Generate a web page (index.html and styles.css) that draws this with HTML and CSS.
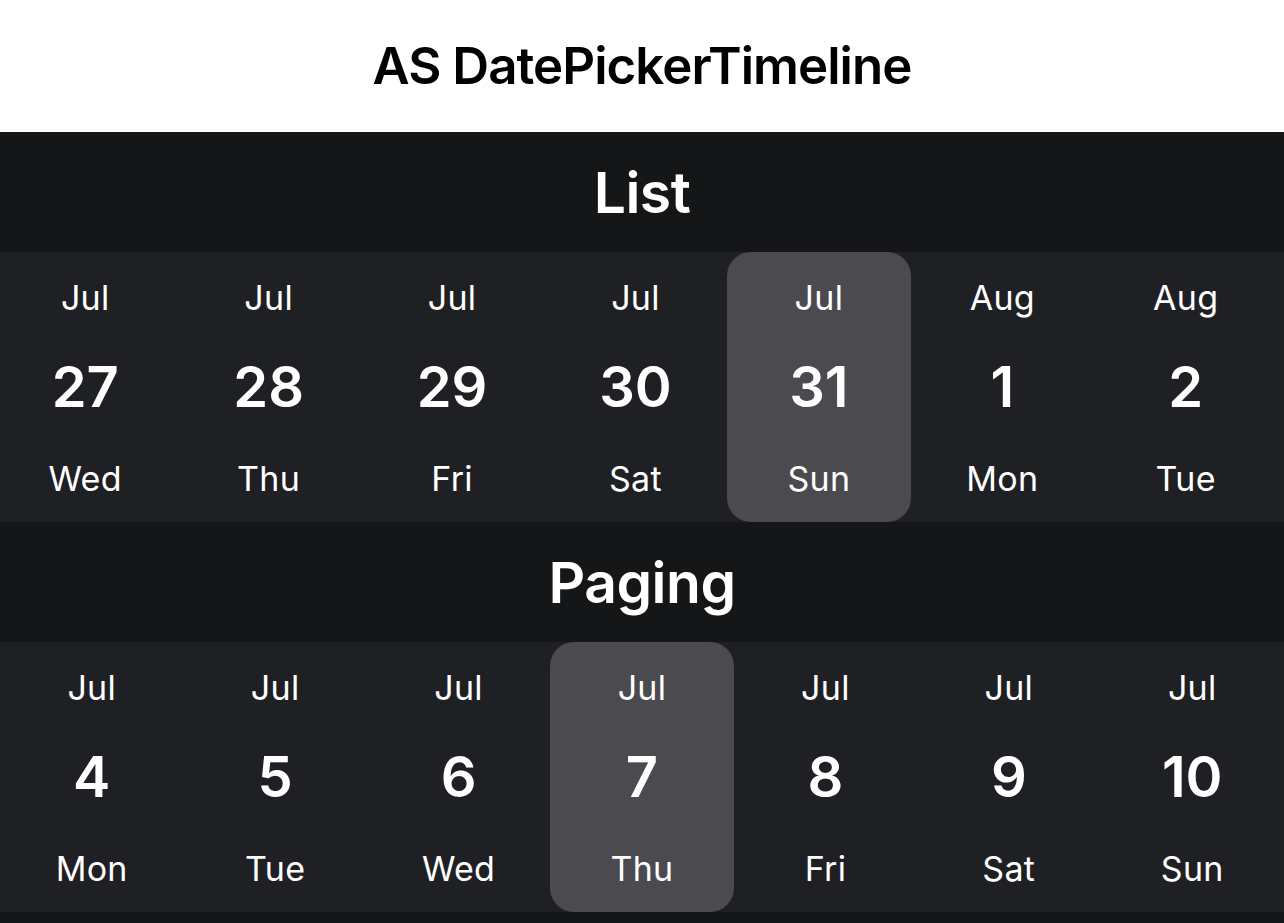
FILE: index.html
```html
<!DOCTYPE html>
<html lang="en">
<head>
<meta charset="utf-8">
<title>AS DatePickerTimeline</title>
<link rel="stylesheet" href="styles.css">
</head>
<body>
<header class="app-title">AS DatePickerTimeline</header>
<main class="content">
  <section class="timeline">
    <h2 class="timeline-title">List</h2>
    <div class="strip">
      <div class="track track-list">
        <div class="day"><span class="month">Jul</span><span class="date">27</span><span class="weekday">Wed</span></div>
        <div class="day"><span class="month">Jul</span><span class="date">28</span><span class="weekday">Thu</span></div>
        <div class="day"><span class="month">Jul</span><span class="date">29</span><span class="weekday">Fri</span></div>
        <div class="day"><span class="month">Jul</span><span class="date">30</span><span class="weekday">Sat</span></div>
        <div class="day selected"><span class="month">Jul</span><span class="date">31</span><span class="weekday">Sun</span></div>
        <div class="day"><span class="month">Aug</span><span class="date">1</span><span class="weekday">Mon</span></div>
        <div class="day"><span class="month">Aug</span><span class="date">2</span><span class="weekday">Tue</span></div>
      </div>
    </div>
  </section>
  <section class="timeline">
    <h2 class="timeline-title">Paging</h2>
    <div class="strip">
      <div class="track">
        <div class="day"><span class="month">Jul</span><span class="date">4</span><span class="weekday">Mon</span></div>
        <div class="day"><span class="month">Jul</span><span class="date">5</span><span class="weekday">Tue</span></div>
        <div class="day"><span class="month">Jul</span><span class="date">6</span><span class="weekday">Wed</span></div>
        <div class="day selected"><span class="month">Jul</span><span class="date">7</span><span class="weekday">Thu</span></div>
        <div class="day"><span class="month">Jul</span><span class="date">8</span><span class="weekday">Fri</span></div>
        <div class="day"><span class="month">Jul</span><span class="date">9</span><span class="weekday">Sat</span></div>
        <div class="day"><span class="month">Jul</span><span class="date">10</span><span class="weekday">Sun</span></div>
      </div>
    </div>
  </section>
</main>
</body>
</html>
```
FILE: styles.css
```css
* { box-sizing: border-box; }
html, body {
  margin: 0;
  padding: 0;
  height: 100%;
}
body {
  font-family: Inter, "Noto Sans", "Liberation Sans", sans-serif;
  background: #151618;
  color: #ffffff;
  overflow: hidden;
}
.app-title {
  height: 132px;
  background: #ffffff;
  color: #000000;
  display: flex;
  align-items: center;
  justify-content: center;
  font-size: 51px;
  font-weight: 600;
  letter-spacing: -0.95px;
  padding-bottom: 1px;
}
.content {
  background: #151618;
}
.timeline-title {
  margin: 0;
  height: 120px;
  display: flex;
  align-items: center;
  justify-content: center;
  font-size: 57px;
  font-weight: 600;
  letter-spacing: -0.5px;
  background: #151618;
}
.strip {
  height: 270px;
  background: #1f2024;
  overflow: hidden;
}
.track {
  display: flex;
  width: 100%;
  height: 100%;
}
.track-list {
  margin-left: -6.5px;
}
.day {
  flex: 0 0 calc(100% / 7);
  width: calc(100% / 7);
  height: 100%;
  display: flex;
  flex-direction: column;
  align-items: center;
  justify-content: space-between;
  padding: 26px 0 23px;
  border-radius: 24px;
}
.day.selected {
  background: #4b4a4f;
}
.month, .weekday {
  font-size: 34px;
  line-height: 40px;
  font-weight: 400;
  letter-spacing: 0.3px;
}
.date {
  font-size: 56px;
  line-height: 64px;
  font-weight: 600;
  padding-bottom: 4px;
}
```
